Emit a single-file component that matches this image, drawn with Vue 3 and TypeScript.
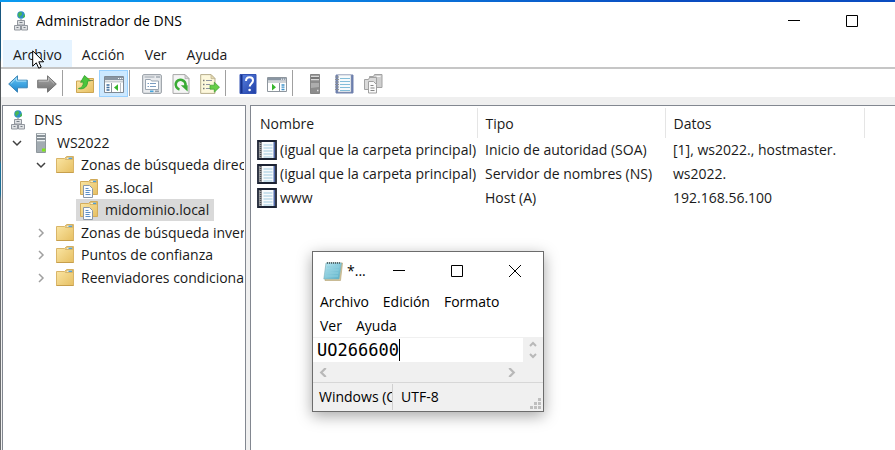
<script setup lang="ts">
import { ref } from 'vue'

interface Tool { icon?: string; label?: string; active?: boolean }
interface TreeNode { level: number; icon: string; label: string; open?: boolean; leaf?: boolean; selected?: boolean }
interface DnsRecord { name: string; type: string; data: string }

const menus: string[] = ['Archivo', 'Acción', 'Ver', 'Ayuda']

const tools: Tool[] = [
  { icon: 'back', label: 'Atrás' },
  { icon: 'forward', label: 'Adelante' },
  {},
  { icon: 'up', label: 'Subir un nivel' },
  { icon: 'console', label: 'Mostrar u ocultar árbol de consola', active: true },
  {},
  { icon: 'props', label: 'Propiedades' },
  { icon: 'refresh', label: 'Actualizar' },
  { icon: 'export', label: 'Exportar lista' },
  {},
  { icon: 'help', label: 'Ayuda' },
  { icon: 'actions', label: 'Mostrar u ocultar panel de acciones' },
  {},
  { icon: 'server', label: 'Nuevo servidor' },
  { icon: 'book', label: 'Nuevo registro' },
  { icon: 'copy', label: 'Nueva zona' },
]

const nodes: TreeNode[] = [
  { level: 0, icon: 'dns', label: 'DNS', leaf: true },
  { level: 1, icon: 'server-on', label: 'WS2022', open: true },
  { level: 2, icon: 'folder', label: 'Zonas de búsqueda directa', open: true },
  { level: 3, icon: 'zone', label: 'as.local', leaf: true },
  { level: 3, icon: 'zone', label: 'midominio.local', leaf: true, selected: true },
  { level: 2, icon: 'folder', label: 'Zonas de búsqueda inversa' },
  { level: 2, icon: 'folder', label: 'Puntos de confianza' },
  { level: 2, icon: 'folder', label: 'Reenviadores condicionales' },
]

const records: DnsRecord[] = [
  { name: '(igual que la carpeta principal)', type: 'Inicio de autoridad (SOA)', data: '[1], ws2022., hostmaster.' },
  { name: '(igual que la carpeta principal)', type: 'Servidor de nombres (NS)', data: 'ws2022.' },
  { name: 'www', type: 'Host (A)', data: '192.168.56.100' },
]

const noteMenus: string[] = ['Archivo', 'Edición', 'Formato', 'Ver', 'Ayuda']
const note = ref<string>('UO266600')
</script>

<template>
  <svg class="sprite" width="0" height="0" aria-hidden="true">
    <defs>
      <linearGradient id="g-blue" x1="0" y1="0" x2="0" y2="1">
        <stop offset="0" stop-color="#6cc8f4" /><stop offset="1" stop-color="#1784cf" />
      </linearGradient>
      <linearGradient id="g-gray" x1="0" y1="0" x2="0" y2="1">
        <stop offset="0" stop-color="#a9a9a9" /><stop offset="1" stop-color="#6f6f6f" />
      </linearGradient>
      <linearGradient id="g-folder" x1="0" y1="0" x2="1" y2="1">
        <stop offset="0" stop-color="#fbe7a6" /><stop offset="1" stop-color="#e6bf62" />
      </linearGradient>
      <linearGradient id="g-help" x1="0" y1="0" x2="1" y2="1">
        <stop offset="0" stop-color="#5b83e2" /><stop offset="1" stop-color="#1f3fa6" />
      </linearGradient>
      <linearGradient id="g-note" x1="0" y1="0" x2="1" y2="1">
        <stop offset="0" stop-color="#b9e6f1" /><stop offset="1" stop-color="#56aec6" />
      </linearGradient>
      <symbol id="i-back" viewBox="0 0 20 20">
        <path d="M.7 10 9.5 1.8v4.4h9.8v7.6H9.5v4.4z" fill="url(#g-blue)" stroke="#3b84b5" />
        <path d="M2.8 9.6 8.6 4v3.1h9.7" fill="none" stroke="#a8e0fa" />
      </symbol>
      <symbol id="i-forward" viewBox="0 0 20 20">
        <path d="M19.3 10 10.5 1.8v4.4H.7v7.6h9.8v4.4z" fill="url(#g-gray)" stroke="#747474" />
        <path d="M1.7 7.2h9.8V4l5.4 5.3" fill="none" stroke="#bdbdbd" />
      </symbol>
      <symbol id="i-folder" viewBox="0 0 20 20">
        <path d="M1.5 3.5h8l2-2h7v16h-17z" fill="url(#g-folder)" stroke="#d9b568" />
        <path d="M10.500 4.500 12 2h5.500v2.500z" fill="#f9edc4" stroke="#c9a454" stroke-width=".7" />
        <path d="M13.500 3.300h3.500" stroke="#4d9fd8" stroke-width="1.300" />
        <path d="M1.500 17.500h17" stroke="#c79f4c" />
      </symbol>
      <symbol id="i-up" viewBox="0 0 20 20">
        <path d="M1.5 7h8l2-2.500h7v14h-17z" fill="url(#g-folder)" stroke="#cda653" />
        <path d="M11.500 6.500h6.500" stroke="#8a8253" />
        <path d="M3.500 14.500c3.500-.5 5-3 4.800-6.500L5.600 8.300 9.500 1.500l5.800 5.200-2.800.5c.5 5-3.500 8.800-9 7.300z" fill="#4cc53c" stroke="#2e9f2d" stroke-width=".8" />
      </symbol>
      <symbol id="i-console" viewBox="0 0 20 20">
        <path d="M.5 2.500h19v16H.5z" fill="#fff" stroke="#7f8994" />
        <path d="M1 3h18v3H1z" fill="#8995a2" />
        <path d="M14 4.500h1.200M16 4.500h1.200M18 4.500h.8" stroke="#fff" />
        <path d="M1 7.500h18" stroke="#c9ced3" stroke-width="2" />
        <path d="M7.500 9v9" stroke="#87919c" />
        <path d="M2.500 11h3M2.500 13.500h3M2.500 16h3" stroke="#3c6c9d" stroke-width="1.300" />
        <path d="M14 10.300v6.600l-4-3.300z" fill="#35b52c" />
        <path d="M16.500 9v9" stroke="#b8bec4" />
      </symbol>
      <symbol id="i-actions" viewBox="0 0 20 20">
        <path d="M.5 3.500h19v14H.5z" fill="#fff" stroke="#8e969e" />
        <path d="M1 4h18v2.500H1z" fill="#8995a2" />
        <path d="M14 5.200h1.200M16 5.200h1.200M18 5.200h.8" stroke="#fff" />
        <path d="M1 8h18" stroke="#cfd3d7" stroke-width="2" />
        <path d="M12.500 9v8" stroke="#87919c" />
        <path d="M14.500 11h3M14.500 13.200h3M14.500 15.500h3" stroke="#3f92c9" stroke-width="1.300" />
        <path d="M5 9.800v6.800l4-3.400z" fill="#35b52c" />
      </symbol>
      <symbol id="i-props" viewBox="0 0 20 20">
        <rect x=".7" y=".7" width="18.600" height="18.600" rx="1" fill="#e9ebee" stroke="#8d949c" />
        <path d="M2.500 3h10" stroke="#9aa2ab" /><path d="M14 3h4" stroke="#7f8994" />
        <path d="M3.500 5.500h5l1 1.500h7v8.500h-13z" fill="#fff" stroke="#9aa5b1" />
        <path d="M5.500 9.500h1.500M8 9.500h6M5.500 12.500h1.500M8 12.500h6" stroke="#7b9cc0" />
        <path d="M8 17.300h3.500" stroke="#45a5dd" stroke-width="1.600" /><path d="M13 17.300h4" stroke="#969fa9" stroke-width="1.600" />
      </symbol>
      <symbol id="i-refresh" viewBox="0 0 20 20">
        <path d="M2 .6h12l4 4v14.800H2z" fill="#f5f5f5" stroke="#a7a7a7" />
        <path d="M14 .6v4h4z" fill="#d9d9d9" stroke="#a7a7a7" stroke-width=".7" />
        <path d="M8.500 15.400a4.900 4.900 0 1 1 5.800-3.400" fill="none" stroke="#3aab35" stroke-width="2.600" />
        <path d="M9.800 11.200h6.800v6.300z" fill="#3aab35" />
      </symbol>
      <symbol id="i-export" viewBox="0 0 20 20">
        <path d="M.7.6H11l4 4v14.800H.7z" fill="#fdf8dc" stroke="#b7ae8d" />
        <path d="M11 .6v4h4z" fill="#e6dcb0" stroke="#b7ae8d" stroke-width=".7" />
        <path d="M3 6.500h1.500M3 10.500h1.500M3 14.500h1.500" stroke="#777" stroke-width="1.500" />
        <path d="M6 6.500h6M6 10.500h4M6 14.500h5" stroke="#9094a3" stroke-width="1.200" />
        <path d="M10 11.200h4.300V8.200l5.200 5-5.200 5v-3H10z" fill="#66cf48" stroke="#3f9f32" stroke-width=".7" />
      </symbol>
      <symbol id="i-help" viewBox="0 0 20 20">
        <path d="M2 .5h16v19H2z" fill="url(#g-help)" stroke="#3353b4" />
        <path d="M3.500 1v18" stroke="#17328b" stroke-width="2" />
        <path d="M8 7c0-5.200 7-4.600 7-.6 0 3-3.300 3-3.300 6.100" fill="none" stroke="#fff" stroke-width="2" />
        <circle cx="11.600" cy="16" r="1.300" fill="#fff" />
      </symbol>
      <symbol id="i-server" viewBox="0 0 20 20">
        <path d="M5.500.5h9v19h-9z" fill="#8c8c8c" stroke="#858585" />
        <path d="M6 2.500h8M6 5.500h8" stroke="#dadada" stroke-width="1.300" />
        <path d="M6 4h8" stroke="#505050" />
        <path d="M6 9h8v4L6 14z" fill="#adadad" /><path d="M12 16.500h1.500" stroke="#ddd" stroke-width="1.500" />
      </symbol>
      <symbol id="i-server-on" viewBox="0 0 20 20">
        <path d="M5.500.5h9v19h-9z" fill="#a3acb2" stroke="#8f979d" />
        <path d="M6 1.500h8M6 4.500h8M6 7.500h8" stroke="#eef2f4" stroke-width="1.400" />
        <path d="M6 3h8M6 6h8" stroke="#5b656c" />
        <path d="M11 15.500h3.500v3H11z" fill="#7fe61c" />
      </symbol>
      <symbol id="i-book" viewBox="0 0 20 20">
        <path d="M2 1h17v18H2z" fill="#6479ad" stroke="#7484ae" />
        <path d="M4 1h13v17H4z" fill="#f6fafc" stroke="#a4adb8" stroke-width=".6" />
        <path d="M6 4.500h10M6 7.500h10M6 10.500h10M6 13.500h10M6 16.500h10" stroke="#83bdd9" />
        <path d="M1 3h4M1 5.500h4M1 8h4M1 10.500h4M1 13h4M1 15.500h4" stroke="#8b8f94" stroke-width="1.200" />
      </symbol>
      <symbol id="i-record" viewBox="0 0 20 20">
        <path d="M1 1h18v18H1z" fill="#f7fafc" stroke="#1c2333" stroke-width="1.800" />
        <path d="M16.500 2H18v16h-1.500z" fill="#5068a8" />
        <path d="M2 2h3v16H2z" fill="#9b9da0" />
        <path d="M3.500 2v16" stroke="#4e5054" stroke-width="1.500" stroke-dasharray="1 1" />
        <path d="M6.500 5h9M6.500 8h9M6.500 11h9M6.500 14h9M6.500 17h9" stroke="#9fc9de" />
      </symbol>
      <symbol id="i-copy" viewBox="0 0 20 20">
        <path d="M6.500 2.500h4l1-2h7.500v13H6.500z" fill="#cfcfcf" stroke="#a2a2a2" />
        <path d="M1.500 5.500h4l1-2h7v12h-12z" fill="#dadada" stroke="#a2a2a2" />
        <path d="M13.500 2.500h4" stroke="#f6f6f6" />
        <path d="M5.500 7.500h5l3 3v8.500h-8z" fill="#fafafa" stroke="#a0a0a0" />
        <path d="M7.500 11.500h3M7.500 14h4M7.500 16.500h4" stroke="#858585" />
      </symbol>
      <symbol id="i-dns" viewBox="0 0 20 20">
        <circle cx="10" cy="4" r="3.800" fill="#2f8fc6" />
        <path d="M7 3c2-3 4-2 4 0s-2 1-2 3-2-1-2-3zM12 5l2-2v3l-2 1z" fill="#46b653" />
        <path d="M10 8v2" stroke="#777" />
        <path d="M6.500 9.500h7v4.500h-7zM3.500 14.500h6v4.500h-6zM10.500 14.500h6v4.500h-6z" fill="#dfe1e4" stroke="#92979e" />
        <path d="M8.500 11.500h3M5.500 16.500h2M12.500 16.500h2" stroke="#777e86" />
      </symbol>
      <symbol id="i-zone" viewBox="0 0 20 20">
        <path d="M1.500 3.500h8l2-2h7v15h-17z" fill="url(#g-folder)" stroke="#d3ac5b" />
        <path d="M11 4.500V2.200h6.500v2.300z" fill="#f9edc4" stroke="#c9a454" stroke-width=".7" />
        <path d="M14 3.400h3" stroke="#4d9fd8" stroke-width="1.300" />
        <path d="M4.500 7.500h6l3 3v9h-9z" fill="#fbfdff" stroke="#8a97a8" />
        <path d="M6.500 10.500h3M6.500 12.500h5M6.500 14.500h4M6.500 16.500h5" stroke="#5d8fc7" />
      </symbol>
      <symbol id="i-notepad" viewBox="0 0 20 20">
        <path d="M3.500 2H19.500L17.500 19.500H2z" fill="#d8c79c" stroke="#b2a06f" stroke-width=".6" />
        <path d="M3 2h15.500l-2.500 16H.8z" fill="url(#g-note)" stroke="#78aebb" stroke-width=".6" />
        <path d="M4 6h12M3.700 9h12M3.300 12h12M3 15h12" stroke="#8fd0df" />
        <path d="M4 2h14" stroke="#596e74" stroke-width="2" stroke-dasharray="1 1" />
      </symbol>
    </defs>
  </svg>

  <div class="desktop">
    <main class="window">
      <header class="titlebar">
        <svg class="icon"><use href="#i-dns" /></svg>
        <h1>Administrador de DNS</h1>
        <div class="caption">
          <button type="button" aria-label="Minimizar"><svg viewBox="0 0 12 12"><path d="M0 5.500h12" /></svg></button>
          <button type="button" aria-label="Maximizar"><svg viewBox="0 0 12 12"><path d="M.5.5h11v11H.5z" /></svg></button>
        </div>
      </header>

      <nav class="menubar">
        <button v-for="(m, i) in menus" :key="m" type="button" :class="{ hot: i === 0 }">{{ m }}</button>
      </nav>

      <div class="toolbar" role="toolbar">
        <template v-for="(t, i) in tools" :key="i">
          <button v-if="t.icon" type="button" :aria-label="t.label" :class="{ active: t.active }">
            <svg class="icon"><use :href="'#i-' + t.icon" /></svg>
          </button>
          <span v-else class="sep"></span>
        </template>
      </div>

      <div class="panes">
        <ul class="tree" role="tree">
          <li v-for="n in nodes" :key="n.label" role="treeitem" :aria-selected="!!n.selected" :class="'level-' + n.level">
            <button v-if="!n.leaf" type="button" class="twisty" :class="{ open: n.open }" :aria-label="n.open ? 'Contraer' : 'Expandir'">
              <svg viewBox="0 0 10 10"><path d="M3 1l4 4-4 4" /></svg>
            </button>
            <span class="node" :class="{ selected: n.selected }">
              <svg class="icon"><use :href="'#i-' + n.icon" /></svg>{{ n.label }}
            </span>
          </li>
        </ul>

        <section class="list">
          <table>
            <colgroup><col class="c-name"><col class="c-type"><col class="c-data"><col></colgroup>
            <thead>
              <tr><th>Nombre</th><th>Tipo</th><th>Datos</th><td></td></tr>
            </thead>
            <tbody>
              <tr v-for="r in records" :key="r.type">
                <td><span class="record"><svg class="icon"><use href="#i-record" /></svg>{{ r.name }}</span></td>
                <td>{{ r.type }}</td>
                <td>{{ r.data }}</td>
                <td></td>
              </tr>
            </tbody>
          </table>
        </section>
      </div>
    </main>

    <section class="notepad">
      <header class="note-title">
        <svg class="icon"><use href="#i-notepad" /></svg>
        <span>*...</span>
        <div class="caption">
          <button type="button" aria-label="Minimizar"><svg viewBox="0 0 12 12"><path d="M0 5.500h12" /></svg></button>
          <button type="button" aria-label="Maximizar"><svg viewBox="0 0 12 12"><path d="M.5.5h11v11H.5z" /></svg></button>
          <button type="button" aria-label="Cerrar"><svg viewBox="0 0 12 12"><path d="M0 0l12 12M12 0L0 12" /></svg></button>
        </div>
      </header>
      <nav class="note-menu">
        <button v-for="m in noteMenus" :key="m" type="button">{{ m }}</button>
      </nav>
      <div class="editor">
        <div class="field">
          <input v-model="note" :size="note.length" aria-label="Editor de texto" spellcheck="false">
          <span class="caret"></span>
        </div>
        <div class="vscroll">
          <button type="button" aria-label="Subir"><svg viewBox="0 0 8 8"><path d="M1 6l3-3 3 3" /></svg></button>
          <button type="button" aria-label="Bajar"><svg viewBox="0 0 8 8"><path d="M1 2l3 3 3-3" /></svg></button>
        </div>
        <div class="hscroll">
          <button type="button" aria-label="Izquierda"><svg viewBox="0 0 8 8"><path d="M6 0L2 4l4 4" /></svg></button>
          <button type="button" aria-label="Derecha"><svg viewBox="0 0 8 8"><path d="M2 0l4 4-4 4" /></svg></button>
        </div>
      </div>
      <footer class="status">
        <span class="eol">Windows (CRLF)</span>
        <span class="enc">UTF-8</span>
        <svg class="grip" viewBox="0 0 11 11">
          <path d="M8 0h3v3H8zM4 4h3v3H4zM8 4h3v3H8zM0 8h3v3H0zM4 8h3v3H4zM8 8h3v3H8z" />
        </svg>
      </footer>
    </section>

    <svg class="pointer" viewBox="0 0 12 19">
      <path d="M.7.8v15.400l3.600-3.400 2.400 5.400 2.500-1.100-2.400-5.300h4.900z" fill="#fff" stroke="#000" />
    </svg>
  </div>
</template>

<style>
body { margin: 0; overflow: hidden; }
</style>

<style scoped>
.sprite { position: absolute; }
.desktop {
  position: relative;
  box-sizing: border-box;
  height: 100vh;
  padding: 2px 0 0 1px;
  background:
    linear-gradient(#17567f 0 55px, #54595c 60px 158px, #1b6d94 162px 192px, #6b6d70 198px) 0 2px / 1px 100% no-repeat,
    linear-gradient(90deg, #0a9af0, #0a8ae8 30%, #0a4cc0 75%);
  font-family: "Open Sans", "Noto Sans", sans-serif;
  font-size: 14px;
  line-height: 20px;
  color: #1a1a1a;
}
button {
  margin: 0;
  padding: 0;
  border: 0;
  background: none;
  font: inherit;
  color: inherit;
}
.icon { display: block; flex: none; width: 20px; height: 20px; }
.window { display: flex; flex-direction: column; height: 100%; background: #fff; }
.titlebar { display: flex; align-items: center; height: 38px; padding-left: 10px; }
h1 { margin: 0 0 0 5px; font-size: 14px; font-weight: 400; color: #000; }
.caption { display: flex; align-self: stretch; margin-left: auto; }
.caption button { display: grid; place-items: center; width: 58px; }
.caption svg { width: 12px; height: 12px; fill: none; stroke: #000; }
.titlebar .caption { padding-right: 14px; }
.menubar { display: flex; height: 27px; padding-left: 2px; border-bottom: 2px solid #c6c6c6; }
.menubar button { height: 27px; padding: 2px 10px 0; }
.menubar .hot { background: #e5f3ff; }
.toolbar { display: flex; height: 27px; padding: 1px 0 0 2px; border-bottom: 8px solid #efefef; }
.toolbar button { display: grid; place-items: center; box-sizing: border-box; width: 29px; height: 27px; border: 1px solid transparent; }
.toolbar .active { background: #cce8ff; border-color: #99d1ff; }
.sep { width: 9px; height: 26px; background: linear-gradient(#a0a0a0, #a0a0a0) 1px 0 / 1px 100% no-repeat; }
.panes { display: flex; flex: 1; gap: 4px; min-height: 0; padding-left: 1px; background: #f0f0f0; }
.tree, .list { box-sizing: border-box; border: 1px solid #828790; border-width: 1px 1px 0; background: #fff; overflow: hidden; }
.tree {
  display: grid;
  grid-template-rows: repeat(4, 22px 23px);
  grid-template-columns: minmax(0, 1fr);
  align-content: start;
  flex: 0 0 244px;
  margin: 0;
  padding: 3px 1px 0 0;
  list-style: none;
}
.tree li { display: flex; align-items: center; min-width: 0; white-space: nowrap; overflow: hidden; }
.level-0 { padding-left: 2px; }
.level-1 { padding-left: 4px; }
.level-2 { padding-left: 28px; }
.level-3 { padding-left: 73px; }
.twisty { display: grid; place-items: center; flex: none; width: 20px; height: 20px; margin-right: 1px; }
.twisty svg { width: 10px; height: 10px; fill: none; stroke: #a0a0a0; stroke-width: 1.5; }
.twisty.open svg { transform: rotate(90deg); stroke: #404040; }
.node { display: flex; align-items: center; flex: none; gap: 6px; height: 22px; padding: 0 5px 0 3px; }
.selected { background: #d9d9d9; }
.list { flex: 1; min-width: 0; border-right: 0; padding-top: 2px; }
table { width: 100%; border-collapse: collapse; table-layout: fixed; }
.c-name { width: 226px; }
.c-type { width: 188px; }
.c-data { width: 199px; }
th { height: 28px; padding: 2px 0 0 8px; border-right: 1px solid #e5e5e5; font-weight: 400; text-align: left; }
td { height: 24px; padding: 0 0 0 8px; white-space: nowrap; }
th:first-child { padding-left: 9px; }
td:first-child { padding-left: 6px; }
.record { display: flex; align-items: center; gap: 3px; }
.notepad {
  position: absolute;
  left: 312px;
  top: 251px;
  box-sizing: border-box;
  width: 232px;
  border: 1px solid #6c6c6c;
  background: #fff;
  box-shadow: 0 4px 14px rgba(0, 0, 0, .35);
  color: #000;
}
.note-title { display: flex; align-items: center; height: 37px; padding-left: 10px; gap: 4px; }
.note-title .caption { padding-right: 2px; }
.note-menu { display: flex; flex-wrap: wrap; padding: 0 14px 0 7px; gap: 0 14px; }
.note-menu button { height: 24px; padding-top: 2px; }
.editor { display: grid; grid-template-columns: 1fr 20px; border-top: 1px solid #f0f0f0; background: #f0f0f0; }
.field { display: flex; align-items: center; height: 24px; padding-left: 4px; background: #fff; }
.field input {
  box-sizing: content-box;
  width: 8ch;
  padding: 0;
  border: 0;
  outline: 0;
  background: none;
  font: 17px/22px "DejaVu Sans Mono", monospace;
  color: #000;
}
.caret { width: 1px; height: 22px; background: #000; }
.vscroll { display: flex; flex-direction: column; justify-content: space-around; }
.editor button { display: grid; place-items: center; width: 20px; height: 12px; }
.editor svg { width: 8px; height: 8px; fill: none; stroke: #b8b8b8; stroke-width: 2; }
.hscroll { display: flex; justify-content: space-between; align-items: center; height: 20px; padding-right: 2px; }
.hscroll svg { width: 9px; height: 9px; }
.status { display: flex; align-items: center; height: 28px; border-top: 1px solid #d7d7d7; background: #f0f0f0; }
.eol { box-sizing: border-box; width: 80px; padding-left: 6px; border-right: 1px solid #d0d0d0; line-height: 26px; white-space: nowrap; overflow: hidden; }
.enc { padding-left: 8px; }
.grip { align-self: flex-end; width: 11px; height: 11px; margin: 0 2px 2px auto; fill: #bfbfbf; }
.pointer { position: absolute; left: 32px; top: 50px; width: 12px; height: 19px; }
</style>
